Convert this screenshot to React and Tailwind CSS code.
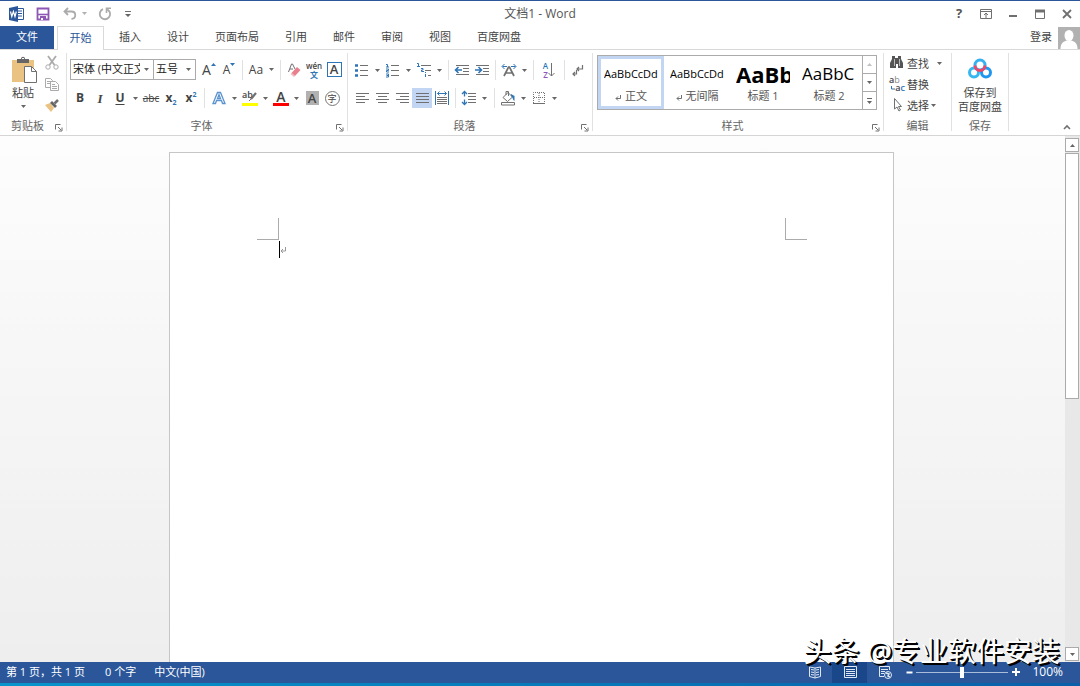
import clsx from 'clsx';

const TABS = ['插入', '设计', '页面布局', '引用', '邮件', '审阅', '视图', '百度网盘'];

const STYLES = [
  { name: '正文', mark: true, sample: 'AaBbCcDd', className: 'text-[11px]', active: true },
  { name: '无间隔', mark: true, sample: 'AaBbCcDd', className: 'text-[11px]' },
  { name: '标题 1', sample: 'AaBb', className: 'text-[22px] font-bold' },
  { name: '标题 2', sample: 'AaBbC', className: 'text-[17px]' },
];

const Svg = ({ w = 16, h = 16, children, className }) => (
  <svg
    width={w}
    height={h}
    viewBox={`0 0 ${w} ${h}`}
    fill="none"
    stroke="#707070"
    className={clsx('shrink-0', className)}
    aria-hidden="true"
  >
    {children}
  </svg>
);

const Caret = ({ className }) => (
  <svg width="5" height="3" viewBox="0 0 5 3" className={clsx('shrink-0', className)} aria-hidden="true">
    <path d="M0 0h5L2.5 3z" fill="#666" />
  </svg>
);

const Tool = ({ label, active, className, children }) => (
  <button
    type="button"
    aria-label={label}
    className={clsx(
      'flex h-5 shrink-0 items-center justify-center leading-none',
      className || 'w-5',
      active ? 'bg-[#c2d5f2]' : 'hover:bg-[#e3ecf9]'
    )}
  >
    {children}
  </button>
);

const Drop = ({ label }) => (
  <Tool label={`${label}选项`} className="w-[11px]">
    <Caret />
  </Tool>
);

const Sep = () => <div className="mx-[3px] h-5 w-px shrink-0 bg-[#e1e1e1]" />;

const Group = ({ title, launcher, className, children }) => (
  <section className={clsx('flex shrink-0 flex-col border-r border-[#e1e1e1]', className)}>
    <div className="h-[68px]">{children}</div>
    <div className="flex h-[10px] items-center">
      <span className="flex-1 text-center text-[#666]">{title}</span>
      {launcher && (
        <button type="button" aria-label={`${title}设置`} className="mt-1 mr-[3px]">
          <Svg w={8} h={8}>
            <path d="M.5 5.5v-5h5M3 3l3 3M7 3.500v3.500h-3.500" />
          </Svg>
        </button>
      )}
    </div>
  </section>
);

/**
 * Paragraph lines used by the alignment buttons
 */
const Lines = ({ rows }) => (
  <Svg>
    {rows.map(([from, to], i) => (
      <path key={i} d={`M${from} ${3.5 + i * 3}H${to}`} />
    ))}
  </Svg>
);

const FieldSelect = ({ label, value, className }) => (
  <label className={clsx('relative flex h-[21px] items-center border border-[#ababab] bg-white', className)}>
    <select
      aria-label={label}
      className="h-full w-full appearance-none overflow-hidden bg-transparent pr-[13px] pl-[2px] text-[11px] text-[#222] outline-none"
    >
      <option>{value}</option>
    </select>
    <Caret className="pointer-events-none absolute right-[4px]" />
  </label>
);

const TitleBar = () => (
  <header className="grid h-[25px] grid-cols-[1fr_auto_1fr] items-center">
    <div className="flex items-center pl-2">
      <Svg w={17} h={16}>
        <path d="M9 2.500h6.500v11H9" fill="#fff" stroke="#2b579a" />
        <path d="M10 5h4M10 7.500h4M10 10h4" stroke="#2b579a" />
        <path d="M1 2l9-2v16l-9-2z" fill="#2b579a" stroke="none" />
        <path d="M2.500 5.500l1.300 5 1.600-5 1.600 5 1.300-5" stroke="#fff" strokeWidth="1.200" />
      </Svg>
      <button type="button" aria-label="保存" className="ml-[10px]">
        <Svg>
          <path d="M2.500 2.500h11v11h-11z" stroke="#8f57b5" strokeWidth="1.800" />
          <path d="M3 8.500h10" stroke="#8f57b5" strokeWidth="1.600" />
          <path d="M5 10h6v4H5z" fill="#8f57b5" stroke="none" />
          <path d="M6 12h2v2H6z" fill="#fff" stroke="none" />
        </Svg>
      </button>
      <button type="button" aria-label="撤消" className="ml-[11px] flex items-center gap-[4px]">
        <Svg>
          <path d="M6 2L2.500 5.500 6 9M3 5.500h6.500c5 0 5 7 0 7.500" stroke="#ababab" strokeWidth="1.800" />
        </Svg>
        <Caret className="opacity-50" />
      </button>
      <button type="button" aria-label="重复" className="ml-[10px]">
        <Svg>
          <path d="M6 3.200A5.200 5.200 0 1 0 12.500 5.500L9.500 2.500" stroke="#ababab" strokeWidth="1.800" />
          <path d="M9.500 7V2.300H14" stroke="#ababab" strokeWidth="1.600" />
        </Svg>
      </button>
      <button type="button" aria-label="自定义快速访问工具栏" className="ml-[12px]">
        <Svg w={6} h={8}>
          <path d="M0 1.500h6" />
          <path d="M0 4h6l-3 3z" fill="#666" stroke="none" />
        </Svg>
      </button>
    </div>
    <h1 className="text-[12px] text-[#555]">文档1 - Word</h1>
    <div className="flex items-center justify-end gap-[11px] pr-[5px]">
      <button type="button" aria-label="帮助" className="w-4 text-[13px] leading-none font-bold text-[#555]">
        ?
      </button>
      <button type="button" aria-label="功能区显示选项">
        <Svg>
          <path d="M2.500 3.500h11v9h-11zM2.500 5.500h11M8 12V7M6 9l2-2 2 2" />
        </Svg>
      </button>
      <button type="button" aria-label="最小化">
        <Svg>
          <path d="M4 10h8" strokeWidth="2" />
        </Svg>
      </button>
      <button type="button" aria-label="最大化">
        <Svg>
          <path d="M3.500 4.500h9v8h-9z" />
          <path d="M3 5h10" strokeWidth="3" />
        </Svg>
      </button>
      <button type="button" aria-label="关闭">
        <Svg>
          <path d="M4 4l8 8M12 4l-8 8" strokeWidth="1.800" />
        </Svg>
      </button>
    </div>
  </header>
);

const TabBar = () => (
  <nav className="flex h-6 items-stretch border-b border-[#d9d9d9]">
    <button type="button" className="w-[54px] bg-[#2b579a] text-white">
      文件
    </button>
    <button
      type="button"
      className="mr-[2px] -mb-px ml-[3px] w-[47px] border border-b-0 border-[#d9d9d9] bg-white text-[#2b579a]"
    >
      开始
    </button>
    {TABS.map((tab) => (
      <button key={tab} type="button" className="px-[13px]">
        {tab}
      </button>
    ))}
    <button type="button" className="ml-auto flex items-center gap-[6px] self-stretch">
      登录
      <Svg w={22} h={22}>
        <path d="M0 0h22v22H0z" fill="#b1b1b1" stroke="none" />
        <ellipse cx="11" cy="8.500" rx="4.500" ry="5.500" fill="#fff" stroke="none" />
        <path d="M2.500 22c0-6 3-7.500 6-8.500h5c3 1 6 2.500 6 8.500z" fill="#fff" stroke="none" />
      </Svg>
    </button>
  </nav>
);

const ClipboardGroup = () => (
  <Group title="剪贴板" launcher className="w-[67px]">
    <div className="flex justify-between pr-[6px] pl-[9px]">
      <button type="button" className="flex flex-col items-center pt-[3px]">
        <Svg w={28} h={30}>
          <path d="M3 4h22v22H3z" fill="#eac282" stroke="none" />
          <path d="M8 3h4c0-3 4-3 4 0h4v4H8z" fill="#666" stroke="none" />
          <path d="M13 2.500h2" stroke="#fff" />
          <path d="M15.500 10.500h7l5 5v11h-12z" fill="#fff" />
          <path d="M22.500 10.500v5h5" />
        </Svg>
        <span className="leading-[14px]">粘贴</span>
        <Caret className="mt-[5px]" />
      </button>
      <div className="flex flex-col gap-px">
        <Tool label="剪切" className="w-4">
          <Svg>
            <path d="M4 1l6.500 9M12 1L5.500 10" stroke="#ababab" strokeWidth="1.800" />
            <circle cx="4" cy="12" r="2.200" stroke="#ababab" />
            <circle cx="12" cy="12" r="2.200" stroke="#ababab" />
          </Svg>
        </Tool>
        <Tool label="复制" className="w-4">
          <Svg>
            <path d="M1.500 2.500h5l2 2v7h-7zM3 5.500h4M3 7.500h3" stroke="#ababab" />
            <path d="M6.500 5.500h5l3 3v6h-8z" fill="#fff" stroke="#ababab" />
            <path d="M8 8.500h3M8 10.500h5M8 12.500h5" stroke="#ababab" />
          </Svg>
        </Tool>
        <Tool label="格式刷" className="w-4">
          <Svg>
            <path d="M1 8l5-2 4 5-3 4z" fill="#eac282" stroke="none" />
            <path d="M6 6l2-2 5 5-2 2z" fill="#666" stroke="none" />
            <path d="M10.500 6.500L14 3" strokeWidth="2.500" />
          </Svg>
        </Tool>
      </div>
    </div>
  </Group>
);

const FontGroup = () => (
  <Group title="字体" launcher className="w-[281px]">
    <div className="flex flex-col gap-2 pt-[6px] pl-[3px]">
      <div className="flex h-[21px] items-center">
        <FieldSelect label="字体" value="宋体 (中文正文)" className="w-[84px]" />
        <FieldSelect label="字号" value="五号" className="-ml-px mr-[3px] w-[43px]" />
        <Tool label="增大字号">
          <span className="text-[14px]">A</span>
          <Svg w={5} h={3} className="-mt-[11px]">
            <path d="M0 3h5L2.500 0z" fill="#2e75b6" stroke="none" />
          </Svg>
        </Tool>
        <Tool label="减小字号">
          <span className="text-[12px]">A</span>
          <Svg w={5} h={3} className="-mt-[11px]">
            <path d="M0 0h5L2.500 3z" fill="#2e75b6" stroke="none" />
          </Svg>
        </Tool>
        <Sep />
        <Tool label="更改大小写">
          <span className="text-[12px]">Aa</span>
        </Tool>
        <Drop label="更改大小写" />
        <Sep />
        <Tool label="清除所有格式">
          <Svg>
            <path d="M2.500 10L5.500 2h1L9 7M4 7h3" />
            <path d="M5.500 11L11 5l3.500 3L9 14z" fill="#e8808d" stroke="none" />
            <path d="M4.500 12l1-1 3.500 3-1 1z" fill="#f3b5bd" stroke="none" />
          </Svg>
        </Tool>
        <Tool label="拼音指南" className="w-5 flex-col">
          <span className="text-[8px] leading-[9px] font-semibold">wén</span>
          <span className="text-[8px] leading-[9px] font-bold text-[#2e75b6]">文</span>
        </Tool>
        <Tool label="字符边框">
          <span className="flex h-[15px] w-[15px] items-center justify-center border border-[#2e75b6] text-[13px] font-semibold">
            A
          </span>
        </Tool>
      </div>
      <div className="flex items-center">
        <Tool label="加粗">
          <b className="text-[12px]">B</b>
        </Tool>
        <Tool label="倾斜">
          <i className="font-['Liberation_Serif',serif] text-[13px] font-bold">I</i>
        </Tool>
        <Tool label="下划线">
          <span className="text-[12px] font-bold underline underline-offset-2">U</span>
        </Tool>
        <Drop label="下划线" />
        <Tool label="删除线">
          <s className="text-[10px]">abc</s>
        </Tool>
        <Tool label="下标">
          <b className="text-[12px]">x</b>
          <span className="mt-[9px] text-[7px] font-bold text-[#2e75b6]">2</span>
        </Tool>
        <Tool label="上标">
          <b className="text-[12px]">x</b>
          <span className="-mt-[7px] text-[7px] font-bold text-[#2e75b6]">2</span>
        </Tool>
        <Sep />
        <div className="w-px" />
        <Tool label="文本效果">
          <Svg>
            <path
              d="M2 13.500L6.500 2.500h3L14 13.500h-2.500l-1-3h-5l-1 3zM6.500 8.500h3L8 4.500z"
              fill="#fff"
              stroke="#5b93cf"
              strokeWidth="1.300"
            />
          </Svg>
        </Tool>
        <Drop label="文本效果" />
        <Tool label="突出显示文本">
          <span className="relative flex h-4 w-4 flex-col border-b-3 border-[#ff0] text-left">
            <span className="text-[9px] leading-[10px] font-semibold">ab</span>
            <Svg w={10} h={10} className="absolute top-[2px] left-[5px]">
              <path d="M9 1L4 7" strokeWidth="2.200" />
              <path d="M4 7l-2 2" />
            </Svg>
          </span>
        </Tool>
        <Drop label="突出显示文本" />
        <Tool label="字体颜色">
          <span className="h-4 w-4 border-b-3 border-[#f00] text-[14px] leading-[13px] font-semibold">A</span>
        </Tool>
        <Drop label="字体颜色" />
        <Tool label="字符底纹">
          <span className="flex h-[14px] w-[13px] items-center justify-center bg-[#b1b1b1] text-[13px] font-semibold">
            A
          </span>
        </Tool>
        <Tool label="带圈字符">
          <span className="flex h-[15px] w-[15px] items-center justify-center rounded-full border border-[#777] text-[9px]">
            字
          </span>
        </Tool>
      </div>
    </div>
  </Group>
);

const ParagraphGroup = () => (
  <Group title="段落" launcher className="w-[245px]">
    <div className="flex flex-col gap-2 pt-[7px] pl-1">
      <div className="flex items-center">
        <Tool label="项目符号">
          <Svg>
            <path d="M6 3.500h8M6 8.500h8M6 13.500h8" />
            <path d="M1 3.500h3M1 8.500h3M1 13.500h3" stroke="#2e75b6" strokeWidth="2.500" />
          </Svg>
        </Tool>
        <Drop label="项目符号" />
        <Tool label="编号">
          <Svg>
            <path d="M6 3.500h8M6 8.500h8M6 13.500h8" />
            <path
              d="M1 2.500h1.500V5M1 5h3M1 7h2.500v1.500H1.500V10H4M1 12h2.500v3H1M1.500 13.500h2"
              stroke="#2e75b6"
            />
          </Svg>
        </Tool>
        <Drop label="编号" />
        <Tool label="多级列表">
          <Svg>
            <path d="M5 3.500h10M9 8.500h6M12 13.500h3" />
            <path d="M1 1.500h1.500V4M1 4.500h3M5 6.500h2v1.500H5.500v1.500H8M9.500 12v3M9.500 10v1" stroke="#2e75b6" />
          </Svg>
        </Tool>
        <Drop label="多级列表" />
        <Sep />
        <Tool label="减少缩进量">
          <Svg>
            <path d="M2 3.500h13M9 6.500h6M9 9.500h6M2 12.500h13" />
            <path d="M8 8H2M4.500 5L1.500 8l3 3" stroke="#2e75b6" strokeWidth="1.600" />
          </Svg>
        </Tool>
        <Tool label="增加缩进量">
          <Svg>
            <path d="M2 3.500h13M9 6.500h6M9 9.500h6M2 12.500h13" />
            <path d="M1 8h6M4.500 5l3 3-3 3" stroke="#2e75b6" strokeWidth="1.600" />
          </Svg>
        </Tool>
        <Sep />
        <Tool label="中文版式">
          <Svg>
            <path d="M3 14L7.500 5h1L13 14M5 11h6" strokeWidth="1.700" />
            <path d="M6 4.500H1.500M3.500 2L1 4.500 3.500 7M10 4.500h4.500M12.500 2L15 4.500 12.500 7" stroke="#2e75b6" />
          </Svg>
        </Tool>
        <Drop label="中文版式" />
        <Sep />
        <Tool label="排序" className="w-6">
          <span className="flex flex-col text-[8px] leading-[9px] font-semibold">
            <span className="text-[#2e75b6]">A</span>
            <span className="text-[#8f57b5]">Z</span>
          </span>
          <Svg w={7}>
            <path d="M3.500 1v13M.5 11l3 3 3-3" />
          </Svg>
        </Tool>
        <Sep />
        <Tool label="显示编辑标记">
          <Svg w={12}>
            <path d="M10.500 3v4H5M7 5L5 7l2 2M4.500 8v4H1M3 10l-2 2 2 2" strokeWidth="1.200" />
          </Svg>
        </Tool>
      </div>
      <div className="flex items-center">
        <Tool label="左对齐">
          <Lines rows={[[2, 15], [2, 11], [2, 15], [2, 11]]} />
        </Tool>
        <Tool label="居中">
          <Lines rows={[[2, 15], [4, 13], [2, 15], [4, 13]]} />
        </Tool>
        <Tool label="右对齐">
          <Lines rows={[[2, 15], [6, 15], [2, 15], [6, 15]]} />
        </Tool>
        <Tool label="两端对齐" active>
          <Lines rows={[[2, 15], [2, 15], [2, 15], [2, 15]]} />
        </Tool>
        <Tool label="分散对齐">
          <Svg>
            <path d="M3 7.500h10M3 9.500h10M3 11.500h10M3 13.500h10" />
            <path d="M1.500 1v14M14.500 1v14M3.500 3.500h9M5.500 1.500l-2 2 2 2M10.500 1.500l2 2-2 2" stroke="#2e75b6" />
          </Svg>
        </Tool>
        <Sep />
        <Tool label="行距">
          <Svg>
            <path d="M7 3.500h8M7 6.500h8M7 9.500h8M7 12.500h8" />
            <path d="M3.500 2v4.500M3.500 9.500V14M1 4l2.500-2.500L6 4M1 12l2.500 2.500L6 12" stroke="#2e75b6" strokeWidth="1.300" />
          </Svg>
        </Tool>
        <Drop label="行距" />
        <div className="w-px" />
        <Sep />
        <Tool label="底纹">
          <Svg>
            <path d="M3 7.500L8 2.500l4.500 4.500-5 4.500zM6 5V1.500h2.500V6" />
            <path d="M11 4l3.500 2v5c-2-1-1-3-3.500-5z" fill="#2e75b6" stroke="none" />
            <path d="M1.500 12.500h13v2.500h-13z" fill="#fff" />
          </Svg>
        </Tool>
        <Drop label="底纹" />
        <Tool label="边框">
          <Svg>
            <path d="M2.500 13V2.500h11V13M8 3v10M3 7.500h10" strokeDasharray="1 1" />
            <path d="M2 13.500h12" />
          </Svg>
        </Tool>
        <Drop label="边框" />
      </div>
    </div>
  </Group>
);

const StylesGroup = () => (
  <Group title="样式" launcher className="w-[291px]">
    <div className="mt-[2px] ml-1 flex h-[55px] w-[280px] border border-[#ababab]">
      {STYLES.map((style) => (
        <button
          key={style.name}
          type="button"
          className={clsx(
            'flex w-[66px] flex-col items-center border-3 whitespace-nowrap',
            style.active ? 'border-[#c2d5f2]' : 'border-transparent'
          )}
        >
          <span
            className={clsx(
              'flex h-[29px] w-[54px] items-center justify-start overflow-hidden leading-none text-black',
              style.className
            )}
          >
            {style.sample}
          </span>
          <span className="flex items-center gap-1 leading-[16px] text-[#555]">
            {style.mark && (
              <Svg w={6} h={6} className="mt-1">
                <path d="M5.500 0v3.500H1M3 1.500l-2 2 2 2" />
              </Svg>
            )}
            {style.name}
          </span>
        </button>
      ))}
      <div className="flex flex-1 flex-col divide-y divide-[#ababab] border-l border-[#ababab]">
        <button type="button" aria-label="上一行" className="flex flex-1 items-center justify-center">
          <Caret className="rotate-180 opacity-40" />
        </button>
        <button type="button" aria-label="下一行" className="flex flex-1 items-center justify-center">
          <Caret />
        </button>
        <button type="button" aria-label="其他" className="flex flex-1 flex-col items-center justify-center gap-[2px]">
          <span className="h-px w-[5px] bg-[#666]" />
          <Caret />
        </button>
      </div>
    </div>
  </Group>
);

const EditingGroup = () => (
  <Group title="编辑" className="w-[68px]">
    <div className="flex flex-col items-start gap-px pl-[5px]">
      <Tool label="查找" className="gap-[2px]">
        <Svg>
          <path d="M3 1h3v2h3V1h3v3l2 4v5H9V9H7v4H1V8l2-4z" fill="#555" stroke="none" />
          <path d="M5.500 4v7M10.500 4v7" stroke="#bbb" />
        </Svg>
        查找
        <Caret className="ml-[6px]" />
      </Tool>
      <Tool label="替换" className="gap-[2px]">
        <span className="flex w-4 flex-col text-[9px] leading-[8px] font-semibold">
          <span className="text-left">
            a<span className="font-normal text-[#888]">b</span>
          </span>
          <span className="flex items-center justify-end">
            <Svg w={4} h={5}>
              <path d="M.5 0v3H4" stroke="#2e75b6" />
            </Svg>
            a<span className="text-[#2e75b6]">c</span>
          </span>
        </span>
        替换
      </Tool>
      <Tool label="选择" className="gap-[2px]">
        <Svg>
          <path d="M5.500 1.500v10.500l2.500-2 2 4 1.500-1-2-3.500h3z" fill="#fff" />
        </Svg>
        选择
        <Caret />
      </Tool>
    </div>
  </Group>
);

const SaveGroup = () => (
  <Group title="保存" className="w-[57px]">
    <button type="button" className="flex w-full flex-col items-center pt-[5px] leading-[14px] whitespace-nowrap">
      <Svg w={26} h={22} className="mb-[6px]">
        <circle cx="13" cy="7" r="5" stroke="#35b0f0" strokeWidth="3" />
        <circle cx="7" cy="14.500" r="4.500" stroke="#35b8f0" strokeWidth="3" />
        <circle cx="19" cy="14.500" r="4.500" stroke="#2196f0" strokeWidth="3" />
        <path d="M8 7.500a5 5 0 0 0 10 0" stroke="#ee4868" strokeWidth="3" />
      </Svg>
      <span>保存到</span>
      <span>百度网盘</span>
    </button>
  </Group>
);

const Ribbon = () => (
  <div className="flex h-[86px] border-b border-[#d5d5d5] pt-[3px] pb-[4px]">
    <ClipboardGroup />
    <FontGroup />
    <ParagraphGroup />
    <StylesGroup />
    <EditingGroup />
    <SaveGroup />
    <button type="button" aria-label="折叠功能区" className="mr-[9px] ml-auto self-end">
      <Svg w={8} h={8}>
        <path d="M1 6l3-3 3 3" strokeWidth="1.600" />
      </Svg>
    </button>
  </div>
);

const Scrollbar = () => (
  <div className="flex w-[15px] flex-col bg-[#e8e8e8] pt-[2px] pr-px pb-[1px]">
    <button type="button" aria-label="向上滚动" className="flex h-[14px] items-center justify-center border border-[#ababab] bg-white">
      <Caret className="rotate-180" />
    </button>
    <div className="mt-px flex-[98] border border-[#ababab] bg-white" />
    <div className="flex-[100]" />
    <button type="button" aria-label="向下滚动" className="flex h-[14px] items-center justify-center border border-[#ababab] bg-white">
      <Caret />
    </button>
  </div>
);

const DocumentArea = () => (
  <main className="flex min-h-0 flex-1 bg-linear-to-b from-[#fdfdfd] to-[#eee]">
    <div className="flex flex-1 justify-center overflow-hidden pt-4 pr-[2px]">
      <div className="w-[725px] border border-b-0 border-[#c6c6c6] bg-white pt-[65px]">
        <div className="flex justify-between pr-[86px] pl-[87px]">
          <div className="size-[22px] border-r border-b border-[#ababab]" />
          <div className="size-[22px] border-b border-l border-[#ababab]" />
        </div>
        <div className="mt-px flex items-center pl-[109px]">
          <span className="h-[17px] w-px bg-black" />
          <Svg w={6} h={8}>
            <path d="M5.500 1v4H1M3 3L1 5l2 2" stroke="#999" />
          </Svg>
        </div>
      </div>
    </div>
    <Scrollbar />
  </main>
);

const StatusBar = () => (
  <footer className="relative">
    <div className="flex h-[21px] items-center bg-[#2b579a] pr-[17px] pb-px pl-[6px] text-white">
      <span>第 1 页，共 1 页</span>
      <span className="ml-[20px]">0 个字</span>
      <span className="ml-[18px]">中文(中国)</span>
      <div className="ml-auto flex h-[21px] items-center">
        <button type="button" aria-label="阅读视图" className="flex h-full w-[35px] items-center justify-center">
          <Svg>
            <path d="M2.500 3l5.500 1 5.500-1v9.500L8 14l-5.500-1.500zM8 4v10M4 5.500l3 .5M4 8l3 .5M4 10.500l3 .5M12 5.500L9 6M12 8l-3 .5M12 10.500l-3 .5" stroke="#dfe7f3" />
          </Svg>
        </button>
        <button type="button" aria-label="页面视图" className="flex h-full w-[35px] items-center justify-center bg-[#19478a]">
          <Svg>
            <path d="M2.500 2.500h12v11h-12zM4 5.500h9M4 7.500h9M4 9.500h9M4 11.500h9" stroke="#dfe7f3" />
          </Svg>
        </button>
        <button type="button" aria-label="Web 版式视图" className="flex h-full w-[35px] items-center justify-center">
          <Svg>
            <path d="M7 12.500H2.500v-10h10V6M4 5.500h7M4 7.500h4M4 9.500h3" stroke="#dfe7f3" />
            <circle cx="11" cy="11" r="3.500" fill="#2b579a" stroke="#dfe7f3" />
            <path d="M9 9l3 1-1 2 2 1" stroke="#dfe7f3" strokeWidth="1.500" />
          </Svg>
        </button>
        <button type="button" aria-label="缩小" className="flex w-[14px] justify-center">
          <Svg w={7} h={7}>
            <path d="M.5 3.500h6" stroke="#fff" strokeWidth="2" />
          </Svg>
        </button>
        <input
          type="range"
          aria-label="显示比例"
          defaultValue="50"
          className="h-[11px] w-[92px] appearance-none bg-[linear-gradient(#a9bcd9,#a9bcd9)] bg-[length:100%_1px] bg-center bg-no-repeat [&::-webkit-slider-thumb]:h-[11px] [&::-webkit-slider-thumb]:w-1 [&::-webkit-slider-thumb]:appearance-none [&::-webkit-slider-thumb]:bg-white"
        />
        <button type="button" aria-label="放大" className="flex w-[15px] justify-center">
          <Svg w={8} h={8}>
            <path d="M0 4h8M4 0v8" stroke="#fff" strokeWidth="2" />
          </Svg>
        </button>
        <span className="ml-[9px] text-[12px]">100%</span>
      </div>
    </div>
    <div className="h-[3px] bg-linear-to-r from-[#0995cc] to-[#0a5fa8]" />
    <p className="pointer-events-none absolute right-[20px] bottom-[21px] text-[28px] leading-[28px] whitespace-nowrap text-white [text-shadow:1px_1px_0_#000,2px_2px_0_#000]">
      头条 @专业软件安装
    </p>
  </footer>
);

export default function App() {
  return (
    <div className="flex h-screen flex-col overflow-hidden border-t border-[#2b579a] bg-white font-['Open_Sans','Noto_Sans_CJK_SC',sans-serif] text-[11px] text-[#444]">
      <TitleBar />
      <TabBar />
      <Ribbon />
      <DocumentArea />
      <StatusBar />
    </div>
  );
}
